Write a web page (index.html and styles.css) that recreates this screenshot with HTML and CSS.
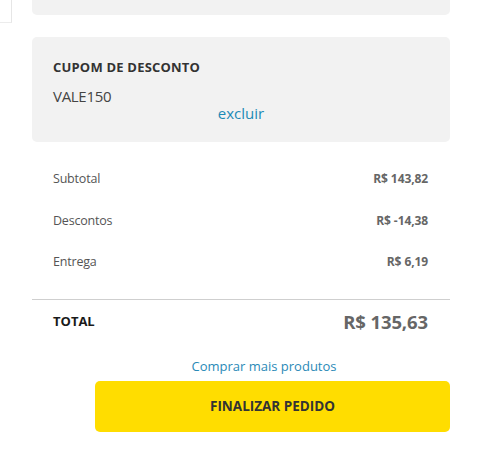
FILE: index.html
```html
<!DOCTYPE html>
<html lang="pt-BR">
<head>
<meta charset="utf-8">
<title>Resumo do pedido</title>
<link rel="stylesheet" href="styles.css">
</head>
<body>
<div class="page">
  <aside class="side"><div class="side-box"></div></aside>
  <main class="summary">
    <div class="prev-card"></div>
    <section class="coupon">
      <h2 class="coupon-title">CUPOM DE DESCONTO</h2>
      <div class="coupon-code">VALE150</div>
      <a class="coupon-remove" href="#">excluir</a>
    </section>
    <section class="totals">
      <div class="row"><span class="label">Subtotal</span><span class="value">R$ 143,82</span></div>
      <div class="row"><span class="label">Descontos</span><span class="value">R$ -14,38</span></div>
      <div class="row"><span class="label">Entrega</span><span class="value">R$ 6,19</span></div>
    </section>
    <div class="total-row"><span class="total-label">TOTAL</span><span class="total-value">R$ 135,63</span></div>
    <a class="more" href="#">Comprar mais produtos</a>
    <button class="checkout" type="button">FINALIZAR PEDIDO</button>
  </main>
</div>
</body>
</html>
```
FILE: styles.css
```css
* { box-sizing: border-box; }
html, body { margin: 0; padding: 0; background: #fff; }
body { font-family: "Open Sans", "Noto Sans", sans-serif; color: #333; }
.page { display: flex; width: 500px; height: 462px; overflow: hidden; }
.side { width: 12px; flex: none; }
.side-box { width: 12px; height: 23px; border-right: 1px solid #e6e6e6; border-bottom: 1px solid #ececec; }
.summary { width: 418px; margin-left: 20px; display: flex; flex-direction: column; }
.prev-card { height: 15px; background: #f2f2f2; border-radius: 0 0 5px 5px; }
.coupon { margin-top: 22px; background: #f2f2f2; border-radius: 5px; padding: 21px 21px 20px; display: flex; flex-direction: column; }
.coupon-title { margin: 0; font-size: 13px; line-height: 18px; font-weight: 700; color: #333; letter-spacing: 0.2px; }
.coupon-code { margin-top: 12px; font-size: 15px; line-height: 16px; color: #444; letter-spacing: -0.3px; }
.coupon-remove { align-self: center; font-size: 15px; line-height: 18px; color: #1c8ab6; text-decoration: none; }
.totals { padding: 16px 22px 16px 21px; border-bottom: 1px solid #cfcfcf; }
.row { display: flex; justify-content: space-between; align-items: center; height: 41.5px; }
.label { font-size: 12.5px; color: #555; letter-spacing: -0.2px; }
.value { font-size: 12px; font-weight: 700; color: #666; letter-spacing: -0.1px; }
.total-row { display: flex; justify-content: space-between; align-items: center; height: 43px; padding: 0 22px 0 21px; }
.total-label { font-size: 13px; font-weight: 700; color: #1a1a1a; }
.total-value { font-size: 18.5px; font-weight: 700; color: #666; letter-spacing: -0.1px; }
.more { margin-top: 13px; padding-left: 46px; text-align: center; font-size: 13px; line-height: 20px; color: #2a8ab7; text-decoration: none; }
.checkout { margin-top: 5px; margin-left: auto; width: 355px; height: 51px; border: 0; border-radius: 5px; background: #ffdd00; font-family: inherit; font-size: 13.5px; font-weight: 700; color: #333; cursor: pointer; }
```
